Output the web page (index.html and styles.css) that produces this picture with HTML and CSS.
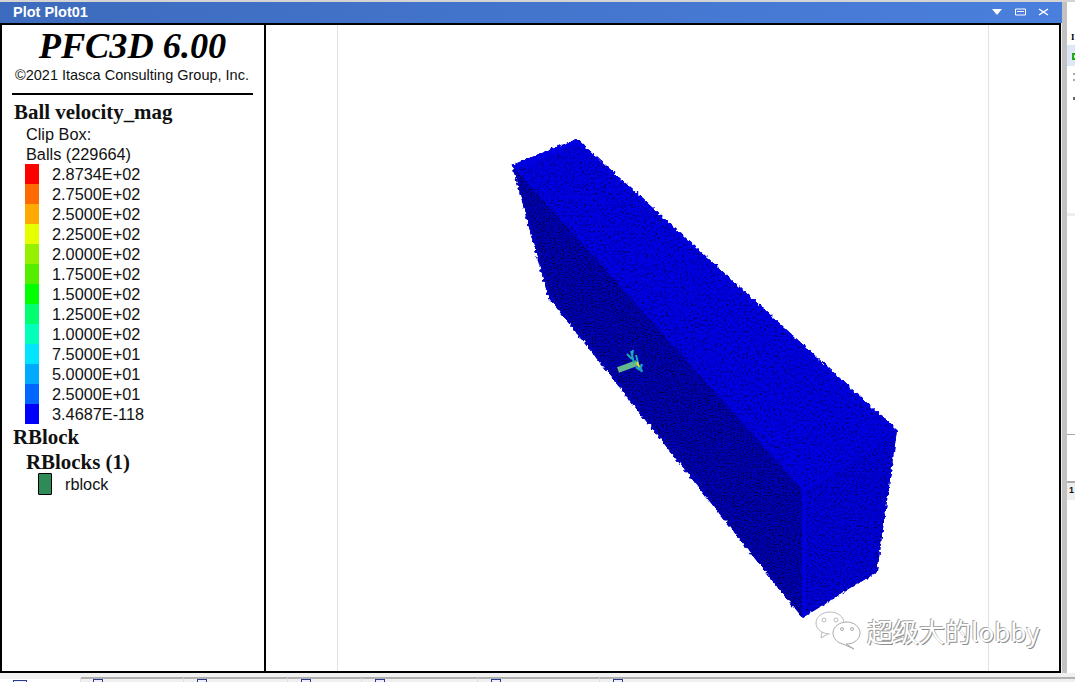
FILE: index.html
```html
<!DOCTYPE html>
<html lang="en">
<head>
<meta charset="utf-8">
<title>Plot Plot01</title>
<link rel="stylesheet" href="styles.css">
</head>
<body>
<div class="app">
  <div class="top-strip"></div>
  <div class="workspace">
    <main class="window">
      <header class="titlebar">
        <span class="title">Plot Plot01</span>
        <div class="win-controls">
          <svg width="12" height="8" viewBox="0 0 12 8"><path d="M1 1h10L6 7z" fill="#fff"/></svg>
          <svg width="11" height="8" viewBox="0 0 11 8"><path d="M.5 1h10v6H.5z M2 3.5h7" fill="none" stroke="#fff"/></svg>
          <svg width="11" height="8" viewBox="0 0 11 8"><path d="M1 1l9 6M10 1L1 7" fill="none" stroke="#fff" stroke-width="1.5"/></svg>
        </div>
      </header>
      <div class="frame">
        <aside class="legend">
          <h1 class="brand">PFC3D 6.00</h1>
          <p class="copyright">©2021 Itasca Consulting Group, Inc.</p>
          <hr class="rule">
          <h2 class="head head-ball">Ball velocity_mag</h2>
          <div class="line ind">Clip Box:</div>
          <div class="line ind">Balls (229664)</div>
          <ul class="scale">
            <li class="row"><i class="sw c1"></i>2.8734E+02</li>
            <li class="row"><i class="sw c2"></i>2.7500E+02</li>
            <li class="row"><i class="sw c3"></i>2.5000E+02</li>
            <li class="row"><i class="sw c4"></i>2.2500E+02</li>
            <li class="row"><i class="sw c5"></i>2.0000E+02</li>
            <li class="row"><i class="sw c6"></i>1.7500E+02</li>
            <li class="row"><i class="sw c7"></i>1.5000E+02</li>
            <li class="row"><i class="sw c8"></i>1.2500E+02</li>
            <li class="row"><i class="sw c9"></i>1.0000E+02</li>
            <li class="row"><i class="sw c10"></i>7.5000E+01</li>
            <li class="row"><i class="sw c11"></i>5.0000E+01</li>
            <li class="row"><i class="sw c12"></i>2.5000E+01</li>
            <li class="row"><i class="sw c13"></i>3.4687E-118</li>
          </ul>
          <h2 class="head head-rb">RBlock</h2>
          <h2 class="head head-rbs">RBlocks (1)</h2>
          <div class="rb-row"><i class="rb-sw"></i>rblock</div>
        </aside>
        <section class="view">
          <svg class="scene" width="793" height="646" viewBox="266 25 793 646">
            <defs>
              <filter id="rough" x="-5%" y="-5%" width="110%" height="110%" color-interpolation-filters="sRGB">
                <feTurbulence type="fractalNoise" baseFrequency="0.3" numOctaves="1" seed="4" result="n"/>
                <feDisplacementMap in="SourceGraphic" in2="n" scale="6" xChannelSelector="R" yChannelSelector="G"/>
              </filter>
              <filter id="spk1" x="0" y="0" width="100%" height="100%" color-interpolation-filters="sRGB">
                <feTurbulence type="fractalNoise" baseFrequency="0.45" numOctaves="2" seed="7"/>
                <feColorMatrix values="0 0 0 0 0  0 0 0 0 0  0 0 0 0 .35  3.5 0 0 0 -1.85"/>
                <feComposite in2="SourceAlpha" operator="in"/>
              </filter>
              <filter id="spk2" x="0" y="0" width="100%" height="100%" color-interpolation-filters="sRGB">
                <feTurbulence type="fractalNoise" baseFrequency="0.65" numOctaves="2" seed="11"/>
                <feColorMatrix values="0 0 0 0 0  0 0 0 0 0  0 0 0 0 .2  3.5 0 0 0 -1.7"/>
                <feComposite in2="SourceAlpha" operator="in"/>
              </filter>
              <filter id="spk3" x="0" y="0" width="100%" height="100%" color-interpolation-filters="sRGB">
                <feTurbulence type="fractalNoise" baseFrequency="0.55" numOctaves="2" seed="21"/>
                <feColorMatrix values="0 0 0 0 0  0 0 0 0 0  0 0 0 0 .3  3.5 0 0 0 -1.8"/>
                <feComposite in2="SourceAlpha" operator="in"/>
              </filter>
            </defs>
            <line class="guide" x1="337.5" y1="25" x2="337.5" y2="671"/>
            <line class="guide" x1="988.5" y1="25" x2="988.5" y2="671"/>
            <g filter="url(#rough)">
              <polygon points="512,165 577,139 897,430 877,572 802,618 548,297" fill="#0000d0"/>
              <polygon points="512,165 577,139 897,430 802,488" fill="#0000e0"/>
              <polygon points="512,165 802,488 802,618 548,297" fill="#0000b4"/>
              <polygon points="802,488 897,430 877,572 802,618" fill="#0000d8"/>
            </g>
            <polygon points="516,169 579,144 896,432 804,488" fill="#000" filter="url(#spk1)"/>
            <polygon points="516,170 802,490 802,616 552,298" fill="#000" filter="url(#spk2)"/>
            <polygon points="806,492 895,434 877,572 806,615" fill="#000" filter="url(#spk3)"/>
            <g class="tool">
              <path d="M618 370l19-7" stroke="#63b890" stroke-width="6"/>
              <path d="M631 351l3 12M636 355l2 8M627 354l5 5M633 350l-1 6" stroke="#1fa8b8" stroke-width="2"/>
              <path d="M637 362l3 7" stroke="#d8e030" stroke-width="2"/>
              <path d="M640 367l2 5M636 367l4 3M642 364l-2 5" stroke="#1c9fc8" stroke-width="2.4"/>
            </g>
          </svg>
          <div class="mark">
            <svg width="48" height="40" viewBox="0 0 48 40" class="mark-icon">
              <path d="M16 23C8 23 2 18 2 12S8 1 16 1s14 5 14 11M8 21l-1 6 7-4" fill="#fff" stroke="#bbb"/>
              <path d="M33 11c7 0 13 5 13 11s-6 11-13 11l-1 0 8 5-11-5c-6-1-10-6-10-11 0-6 6-11 14-11z" fill="#fff" stroke="#aaa"/>
              <circle cx="10" cy="9" r="2" fill="none" stroke="#bbb"/><circle cx="22" cy="9" r="2" fill="none" stroke="#bbb"/>
              <circle cx="28" cy="18" r="1.5" fill="none" stroke="#aaa"/><circle cx="38" cy="18" r="1.5" fill="none" stroke="#aaa"/>
            </svg>
            <span class="mark-text">超级大的lobby</span>
          </div>
        </section>
      </div>
    </main>
    <div class="gutter"></div>
    <aside class="side">
      <div class="side-i">I</div>
      <div class="side-sel"><i class="side-green"></i></div>
      <div class="side-dots"></div>
      <div class="side-dark"></div>
      <div class="side-bar"></div>
      <div class="side-line"></div>
      <div class="side-head">1</div>
    </aside>
  </div>
  <footer class="tabs">
    <div class="tab tab-on"><i class="tab-ico"></i></div>
    <div class="tab t2"><i class="tab-ico"></i></div>
    <div class="tab t3"><i class="tab-ico"></i></div>
    <div class="tab t4"><i class="tab-ico"></i></div>
    <div class="tab t5"><i class="tab-ico"></i></div>
    <div class="tab t6"><i class="tab-ico"></i></div>
    <div class="tab t7"><i class="tab-ico"></i></div>
  </footer>
</div>
</body>
</html>
```
FILE: styles.css
```css
* { box-sizing: border-box; }
html, body { margin: 0; padding: 0; height: 100%; overflow: hidden; background: #f0f0f0; }
.app { width: 1075px; height: 682px; display: flex; flex-direction: column; font-family: "Liberation Sans", Arial, sans-serif; color: #111; }
.top-strip { height: 2px; background: #d4d4d4; flex: none; }
.workspace { display: flex; height: 671px; flex: none; }
.window { width: 1062px; display: flex; flex-direction: column; background: #f0f0f0; flex: none; }
.titlebar { height: 21px; flex: none; display: flex; align-items: center; justify-content: space-between; padding: 0 13px 1px 13px; background: linear-gradient(90deg, #3d6bbd, #4a7fdd); }
.title { color: #fff; font-weight: 700; font-size: 14.5px; }
.win-controls { display: flex; align-items: center; gap: 12px; }
.frame { height: 650px; width: 1061px; border: 2px solid #000; display: flex; background: #fff; }
.legend { width: 264px; flex: none; border-right: 2px solid #000; padding: 0 0 0 10px; font-size: 16.3px; }
.brand { margin: 0; width: 241px; text-align: center; font: italic 700 36.3px/42px "Liberation Serif", "Times New Roman", serif; color: #000; white-space: nowrap; }
.copyright { margin: 0 0 0 3px; font-size: 14.5px; line-height: 16px; white-space: nowrap; }
.rule { margin: 10px 0 0 0; width: 241px; height: 2px; border: 0; background: #000; }
.head { margin: 0; font: 700 20.9px/24px "Liberation Serif", "Times New Roman", serif; color: #111; white-space: nowrap; }
.head-ball { margin: 5px 0 0 2px; }
.line { font-size: 16.3px; line-height: 20px; }
.ind { margin-left: 14px; }
.scale { list-style: none; margin: 0; padding: 0; }
.row { display: flex; align-items: center; height: 20px; font-size: 16.3px; padding-left: 13px; }
.sw { width: 14px; height: 20px; margin-right: 13px; flex: none; }
.c1 { background: #ff0000; } .c2 { background: #ff6a00; } .c3 { background: #ffaa00; } .c4 { background: #e6ff00; }
.c5 { background: #95f000; } .c6 { background: #55ee00; } .c7 { background: #00ff00; } .c8 { background: #00ff70; }
.c9 { background: #00ffb8; } .c10 { background: #00e5ff; } .c11 { background: #00aaff; } .c12 { background: #0066ff; } .c13 { background: #0000ff; }
.head-rb { margin: 1px 0 0 1px; }
.head-rbs { margin: 1px 0 0 14px; }
.rb-row { display: flex; align-items: center; height: 22px; margin-top: -1px; padding-left: 26px; font-size: 16.3px; }
.rb-sw { width: 14px; height: 22px; margin-right: 13px; background: #2e8b57; border: 1px solid #000; border-radius: 1px; }
.view { position: relative; flex: 1; overflow: hidden; }
.scene { display: block; }
.guide { stroke: #e2e2e2; stroke-width: 1; }
.tool { fill: none; }
.mark { position: absolute; left: 548px; top: 586px; display: flex; align-items: center; gap: 5px; }
.mark-text { font: 26px/34px "Noto Sans CJK SC", "Noto Sans", sans-serif; color: #fff; text-shadow: -1px -1px 0 #aaa, 1px 1px 0 #8c8c8c; white-space: nowrap; }
.gutter { width: 5px; flex: none; background: #c2c2c2; }
.side { flex: 1; background: #fff; overflow: hidden; }
.side-i { height: 12px; margin-top: 29px; padding-left: 4px; font: 700 9px/12px "Liberation Serif", serif; color: #000; }
.side-sel { height: 21px; margin-top: 2px; background: #dce8f4; padding: 8px 0 0 5px; }
.side-green { display: block; width: 4px; height: 7px; border: 2px solid #22aa11; border-right: 0; }
.side-dots { height: 8px; width: 2px; margin: 7px 0 0 6px; background: linear-gradient(#aaa 0 2px, #fff 2px 6px, #aaa 6px); }
.side-dark { height: 3px; width: 3px; margin: 16px 0 0 6px; background: #666; }
.side-bar { height: 3px; margin-top: 113px; background: #eee; }
.side-line { height: 1px; margin-top: 218px; background: #aaa; }
.side-head { height: 19px; margin-top: 46px; border-top: 2px solid #aaa; background: #eee; font: 700 9px/14px "Liberation Sans", sans-serif; padding-left: 2px; }
.tabs { height: 9px; flex: none; display: flex; background: #f0f0f0; }
.tab { border-top: 2px solid #b0b0b0; margin-top: 4px; height: 5px; border-right: 1px solid #ddd; flex: none; position: relative; }
.tab-on { width: 81px; background: #fff; border-top-color: #f0f0f0; }
.tab:last-child { flex: 1; border-right: 0; }
.tab-ico { display: block; position: absolute; top: 0; width: 10px; height: 4px; border: 1px solid #2a3a8c; border-bottom: 0; background: #eef; }
.tab-on .tab-ico { left: 13px; top: 1px; height: 2px; width: 14px; }
.t2 { width: 103px; } .t2 .tab-ico { left: 12px; }
.t3 { width: 104px; } .t3 .tab-ico { left: 13px; }
.t4 { width: 74px; } .t4 .tab-ico { left: 13px; }
.t5 { width: 116px; } .t5 .tab-ico { left: 13px; }
.t6 { width: 122px; } .t6 .tab-ico { left: 13px; }
.t7 .tab-ico { left: 13px; }
```
